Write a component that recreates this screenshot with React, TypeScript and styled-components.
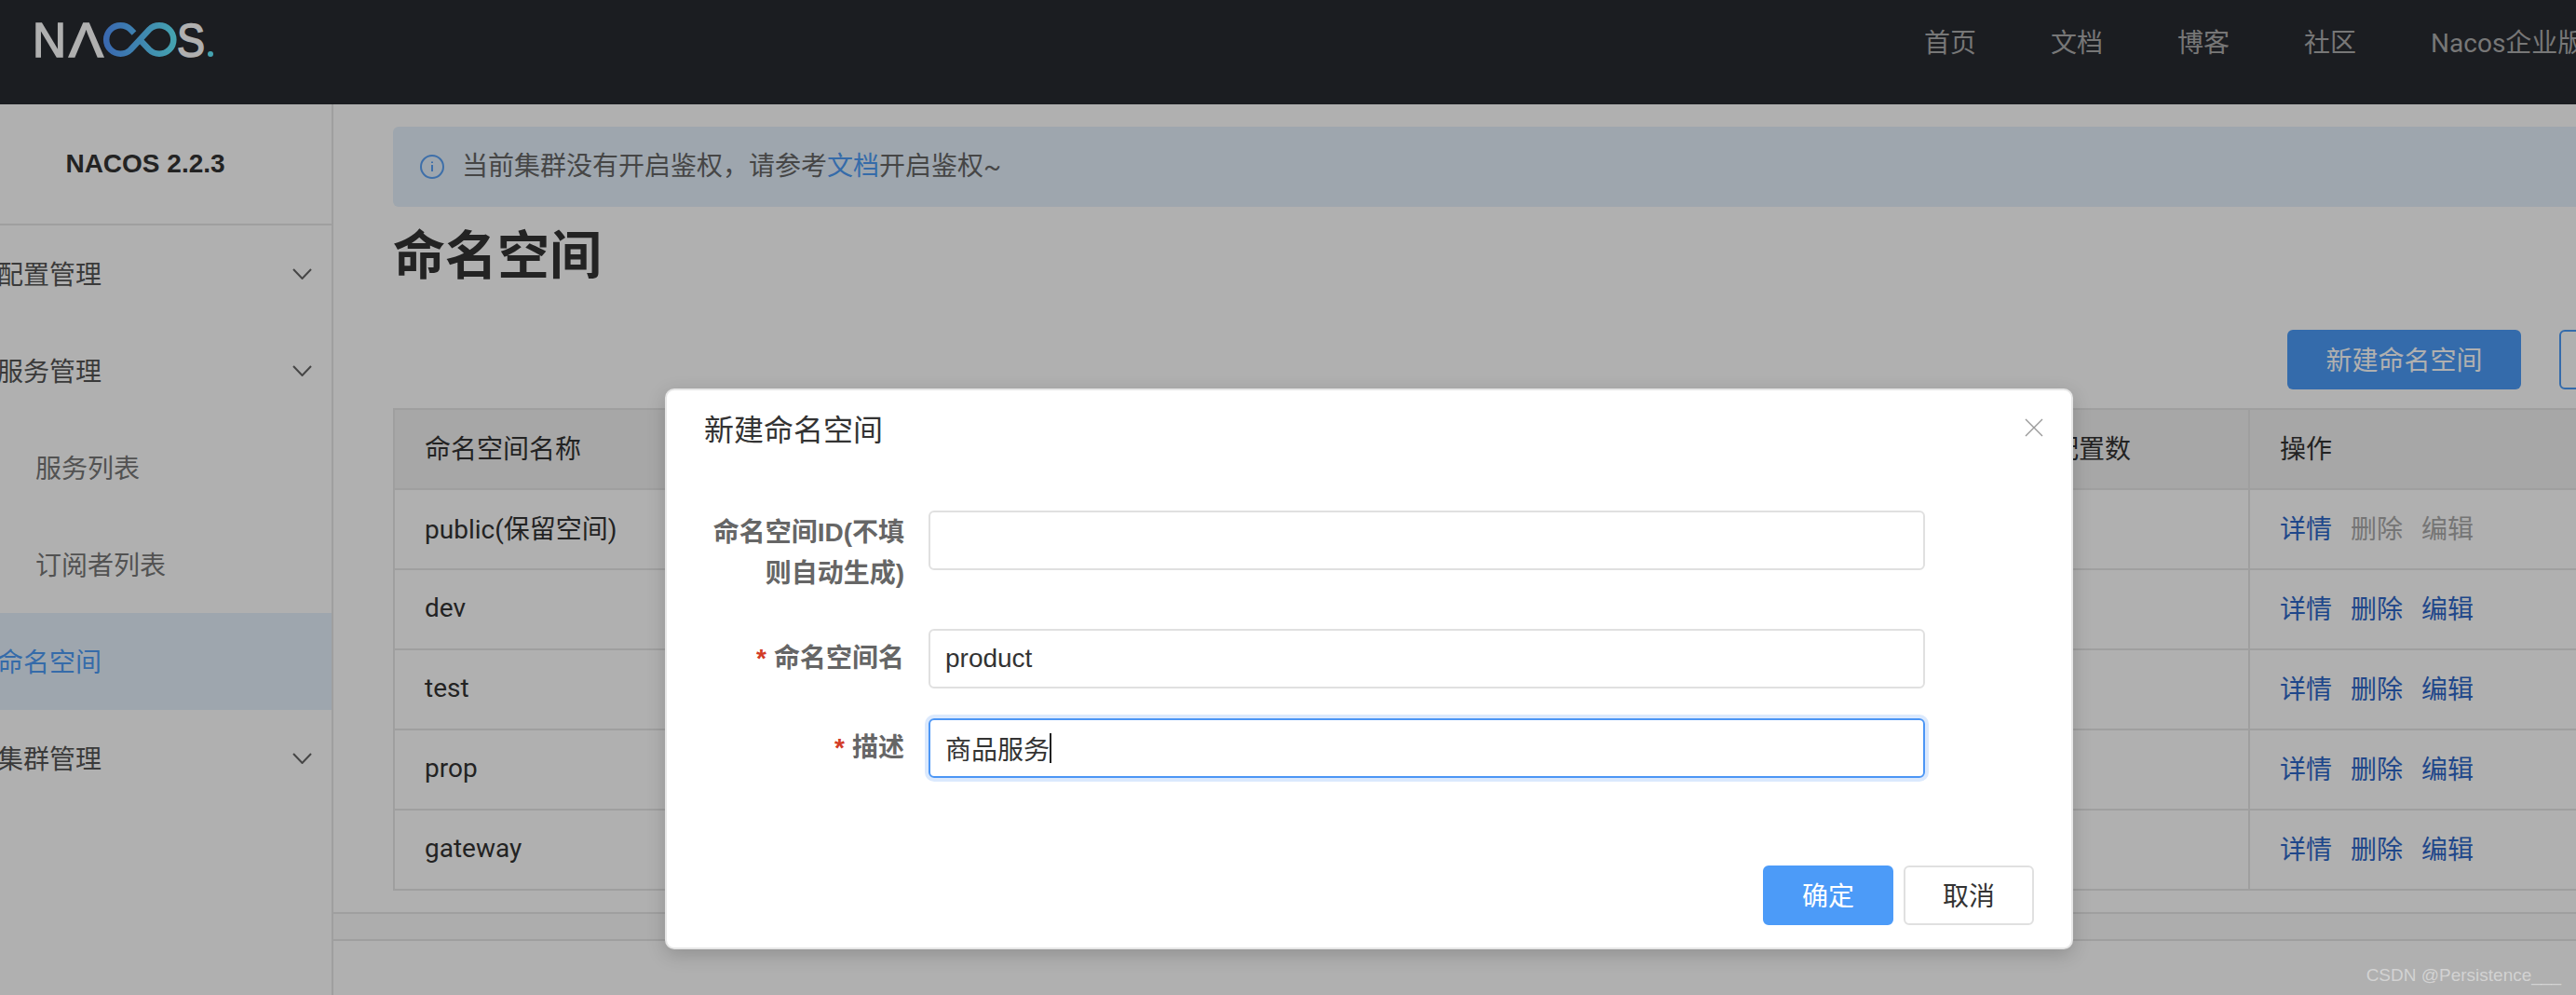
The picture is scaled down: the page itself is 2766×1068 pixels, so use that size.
import React from "react";
import styled, { createGlobalStyle } from "styled-components";

const FONT = `Roboto, "Noto Sans CJK SC", sans-serif`;
const ARIAL = `"Liberation Sans", "Noto Sans CJK SC", sans-serif`;

const GlobalStyle = createGlobalStyle`
  html, body {
    margin: 0;
    padding: 0;
    background: #fff;
    overflow: hidden;
  }
  * {
    box-sizing: border-box;
  }
`;

const Page = styled.div`
  position: relative;
  width: 2766px;
  height: 1068px;
  overflow: hidden;
  font-family: ${FONT};
  font-size: 28px;
  color: #333;
  background: #fff;
`;

const Wide = styled.div`
  width: 2900px;
  height: 100%;
  display: flex;
  flex-direction: column;
`;

const Header = styled.header`
  flex: 0 0 112px;
  display: flex;
  background: #282a31;
`;

const Logo = styled.svg`
  flex: 0 0 204px;
  width: 204px;
  height: 66px;
  margin: 10px 0 0 32px;
`;

const Nav = styled.nav`
  display: flex;
  gap: 80px;
  margin-left: 1830px;
  height: 88px;
  align-items: center;
  white-space: nowrap;
  color: #adadad;
`;

const Body = styled.div`
  flex: 1;
  display: flex;
  min-height: 0;
`;

const Sidebar = styled.aside`
  flex: 0 0 358px;
  border-right: 2px solid #e6e6e6;
`;

const Version = styled.div`
  height: 130px;
  border-bottom: 2px solid #e6e6e6;
  display: flex;
  align-items: center;
  justify-content: center;
  padding: 0 44px 0 0;
  font-family: ${ARIAL};
  font-weight: 700;
  color: #333;
`;

const MenuItem = styled.div<{ $active?: boolean; $sub?: boolean }>`
  height: 104px;
  display: flex;
  align-items: center;
  justify-content: space-between;
  padding: 0 21px 0 ${(p) => (p.$sub ? "38px" : "0")};
  background: ${(p) => (p.$active ? "#e5f1fd" : "transparent")};
  color: ${(p) => (p.$active ? "#4d9bf5" : p.$sub ? "#777" : "#555")};
`;

const MenuLabel = styled.span<{ $sub?: boolean }>`
  margin: 0 0 2px ${(p) => (p.$sub ? "0" : "-3px")};
`;

const Chevron = styled.svg`
  width: 21px;
  height: 12px;
  fill: none;
  stroke: #666;
  stroke-width: 2;
`;

const Content = styled.main`
  flex: 1;
  min-width: 0;
  display: flex;
  flex-direction: column;
`;

const Inner = styled.div`
  padding: 24px 40px 0 64px;
`;

const Alert = styled.div`
  height: 86px;
  display: flex;
  align-items: center;
  gap: 19px;
  padding: 0 0 6px 29px;
  border-radius: 6px;
  background: #e5f1fd;
  color: #666;
`;

const InfoIcon = styled.svg`
  width: 26px;
  height: 26px;
  margin-top: 6px;
  fill: none;
  stroke: #5aa1f5;
  stroke-width: 2;
`;

const DocLink = styled.a`
  color: #4d9bf5;
`;

const Title = styled.h1`
  margin: 0;
  height: 100px;
  line-height: 106px;
  font-size: 56px;
  font-weight: 700;
  color: #333;
`;

const Toolbar = styled.div`
  margin-top: 32px;
  display: flex;
  justify-content: flex-end;
  gap: 41px;
`;

const PrimaryButton = styled.div`
  width: 251px;
  height: 64px;
  display: flex;
  align-items: center;
  justify-content: center;
  padding-bottom: 3px;
  border-radius: 6px;
  background: #4c9bf8;
  color: #fff;
`;

const OutlineButton = styled.div`
  width: 112px;
  height: 64px;
  border: 2px solid #4c9bf8;
  border-radius: 6px;
`;

const Table = styled.div`
  margin-top: 20px;
  border-top: 2px solid #e6e6e6;
`;

const Row = styled.div<{ $head?: boolean }>`
  display: grid;
  grid-template-columns: 1748px 244px 1fr;
  height: 86px;
  border-bottom: 2px solid #e6e6e6;
  background: ${(p) => (p.$head ? "#f2f2f2" : "transparent")};
`;

const Cell = styled.div`
  display: flex;
  align-items: center;
  gap: 20px;
  padding: 0 0 4px 32px;
  border-left: 2px solid #e6e6e6;
  color: #333;
`;

const Action = styled.a<{ $disabled?: boolean }>`
  color: ${(p) => (p.$disabled ? "#aaa" : "#2f68c8")};
`;

const FooterBar = styled.div`
  margin-top: 23px;
  height: 31px;
  border-top: 2px solid #e6e6e6;
  border-bottom: 2px solid #e6e6e6;
  background: #fbfbfb;
`;

const Mask = styled.div`
  position: absolute;
  inset: 0;
  background: rgba(0, 0, 0, 0.31);
`;

const Dialog = styled.div`
  position: absolute;
  left: 714px;
  top: 417px;
  width: 1512px;
  height: 602px;
  display: flex;
  flex-direction: column;
  border: 2px solid #e6e6e6;
  border-radius: 10px;
  background: #fff;
  box-shadow: 0 6px 20px rgba(0, 0, 0, 0.18);
`;

const DialogTitle = styled.div`
  padding: 22px 40px 0;
  line-height: 42px;
  font-size: 32px;
  color: #333;
`;

const CloseIcon = styled.svg`
  position: absolute;
  top: 30px;
  right: 30px;
  width: 20px;
  height: 20px;
  fill: none;
  stroke: #999;
  stroke-width: 1.4;
`;

const Form = styled.div`
  padding: 65px 0 0 40px;
  display: flex;
  flex-direction: column;
`;

const FormRow = styled.div<{ $gap: number }>`
  display: grid;
  grid-template-columns: 215px 1070px;
  column-gap: 26px;
  margin-bottom: ${(p) => p.$gap}px;
`;

const FieldLabel = styled.label<{ $double?: boolean }>`
  text-align: right;
  font-family: ${ARIAL};
  font-weight: 700;
  color: #666;
  line-height: ${(p) => (p.$double ? "44px" : "64px")};
  margin-top: ${(p) => (p.$double ? "2px" : "0")};
`;

const Required = styled.span`
  margin-right: 8px;
  color: #d23c26;
`;

const Field = styled.div<{ $focus?: boolean }>`
  height: 64px;
  display: flex;
  align-items: center;
  padding: 0 16px;
  border: 2px solid ${(p) => (p.$focus ? "#4c96f5" : "#e0e0e0")};
  border-radius: 6px;
  font-family: ${ARIAL};
  color: #333;
  box-shadow: ${(p) => (p.$focus ? "0 0 0 4px #dbe9fd" : "none")};
`;

const Caret = styled.span`
  width: 2px;
  height: 32px;
  background: #222;
`;

const DialogFooter = styled.div`
  margin-top: auto;
  padding: 0 40px 24px 0;
  display: flex;
  justify-content: flex-end;
  gap: 11px;
`;

const DialogButton = styled.div<{ $primary?: boolean }>`
  width: 140px;
  height: 64px;
  display: flex;
  align-items: center;
  justify-content: center;
  padding-bottom: 2px;
  border-radius: 6px;
  border: 2px solid ${(p) => (p.$primary ? "#4c9bf8" : "#e0e0e0")};
  background: ${(p) => (p.$primary ? "#4c9bf8" : "#fff")};
  color: ${(p) => (p.$primary ? "#fff" : "#333")};
`;

const Watermark = styled.div`
  position: absolute;
  right: 16px;
  bottom: 8px;
  font-family: ${ARIAL};
  font-size: 19px;
  line-height: 26px;
  color: rgba(255, 255, 255, 0.45);
`;

const NAV_ITEMS = ["首页", "文档", "博客", "社区", "Nacos企业版"];
const NAMESPACES = ["public(保留空间)", "dev", "test", "prop", "gateway"];

const Down = () => (
  <Chevron viewBox="0 0 21 12">
    <path d="M1 1l9.5 10L20 1" />
  </Chevron>
);

const App: React.FC = () => {
  return (
    <Page>
      <GlobalStyle />
      <Wide>
        <Header>
          <Logo viewBox="-6 -14 204 66">
            <defs>
              <linearGradient id="nacos" gradientUnits="userSpaceOnUse" x1="76" y1="0" x2="150" y2="0">
                <stop offset="0" stopColor="#5499ff" />
                <stop offset="1" stopColor="#64ecff" />
              </linearGradient>
            </defs>
            <text x="-3" y="37" fontFamily="Liberation Sans" fontSize="52" fill="#fff" stroke="#fff" strokeWidth="1.6" textLength="36" lengthAdjust="spacingAndGlyphs">N</text>
            <text x="36" y="37" fontFamily="Liberation Sans" fontSize="52" fill="#fff" stroke="#fff" strokeWidth="1.6" textLength="37" lengthAdjust="spacingAndGlyphs">Λ</text>
            <path
              d="M106 11.5l-3.7-3.8A15.3 15.3 0 1 0 102.3 29.3L122.2 7.7A15.3 15.3 0 1 1 122.2 29.3L112.5 19"
              fill="none"
              stroke="url(#nacos)"
              strokeWidth="6.5"
            />
            <text x="152" y="37" fontFamily="Liberation Sans" fontSize="50" fill="#fff" stroke="#fff" strokeWidth="1.6" textLength="30" lengthAdjust="spacingAndGlyphs">S</text>
            <circle cx="188" cy="34" r="3" fill="#64ecff" />
          </Logo>
          <Nav>
            {NAV_ITEMS.map((item) => (
              <span key={item}>{item}</span>
            ))}
          </Nav>
        </Header>
        <Body>
          <Sidebar>
            <Version>NACOS 2.2.3</Version>
            <MenuItem>
              <MenuLabel>配置管理</MenuLabel>
              <Down />
            </MenuItem>
            <MenuItem>
              <MenuLabel>服务管理</MenuLabel>
              <Down />
            </MenuItem>
            <MenuItem $sub>
              <MenuLabel $sub>服务列表</MenuLabel>
            </MenuItem>
            <MenuItem $sub>
              <MenuLabel $sub>订阅者列表</MenuLabel>
            </MenuItem>
            <MenuItem $active>
              <MenuLabel>命名空间</MenuLabel>
            </MenuItem>
            <MenuItem>
              <MenuLabel>集群管理</MenuLabel>
              <Down />
            </MenuItem>
          </Sidebar>
          <Content>
            <Inner>
              <Alert>
                <InfoIcon viewBox="0 0 26 26">
                  <circle cx="13" cy="13" r="12" />
                  <path d="M13 11v7M13 7.5v1.5" />
                </InfoIcon>
                <span>
                  当前集群没有开启鉴权，请参考<DocLink>文档</DocLink>开启鉴权~
                </span>
              </Alert>
              <Title>命名空间</Title>
              <Toolbar>
                <PrimaryButton>新建命名空间</PrimaryButton>
                <OutlineButton />
              </Toolbar>
              <Table>
                <Row $head>
                  <Cell>命名空间名称</Cell>
                  <Cell>配置数</Cell>
                  <Cell>操作</Cell>
                </Row>
                {NAMESPACES.map((name, i) => (
                  <Row key={name}>
                    <Cell>{name}</Cell>
                    <Cell />
                    <Cell>
                      <Action>详情</Action>
                      <Action $disabled={i === 0}>删除</Action>
                      <Action $disabled={i === 0}>编辑</Action>
                    </Cell>
                  </Row>
                ))}
              </Table>
            </Inner>
            <FooterBar />
          </Content>
        </Body>
      </Wide>
      <Mask />
      <Dialog>
        <DialogTitle>新建命名空间</DialogTitle>
        <CloseIcon viewBox="0 0 20 20">
          <path d="M1 1l18 18M19 1L1 19" />
        </CloseIcon>
        <Form>
          <FormRow $gap={37}>
            <FieldLabel $double>命名空间ID(不填则自动生成)</FieldLabel>
            <Field />
          </FormRow>
          <FormRow $gap={32}>
            <FieldLabel>
              <Required>*</Required>命名空间名
            </FieldLabel>
            <Field>product</Field>
          </FormRow>
          <FormRow $gap={0}>
            <FieldLabel>
              <Required>*</Required>描述
            </FieldLabel>
            <Field $focus>
              商品服务
              <Caret />
            </Field>
          </FormRow>
        </Form>
        <DialogFooter>
          <DialogButton $primary>确定</DialogButton>
          <DialogButton>取消</DialogButton>
        </DialogFooter>
      </Dialog>
      <Watermark>CSDN @Persistence___</Watermark>
    </Page>
  );
};

export default App;
